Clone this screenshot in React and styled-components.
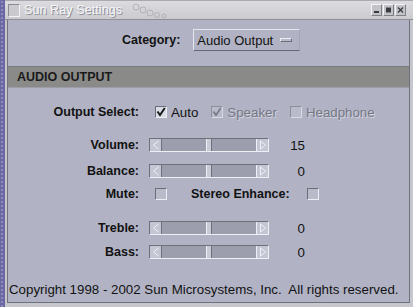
import React from "react";
import styled, { createGlobalStyle } from "styled-components";

const Global = createGlobalStyle`
  html, body { margin: 0; padding: 0; }
  body {
    width: 413px; height: 307px; overflow: hidden;
    background-color: #6a67a3;
    background-image: radial-gradient(#8d8ac0 0.8px, transparent 1px);
    background-size: 4px 4px;
    font-family: "Liberation Sans", Arial, sans-serif;
  }
`;

const Desktop = styled.div`
  width: 413px;
  height: 307px;
  display: flex;
  justify-content: flex-end;
`;

const Window = styled.div`
  width: 408px;
  height: 307px;
  display: flex;
  flex-direction: column;
  background: #c6c7cd;
`;

const TitleBar = styled.div`
  height: 20px;
  box-sizing: border-box;
  border-top: 1px solid #a9a9b1;
  border-bottom: 1px solid #8e8f97;
  background: linear-gradient(#dcdce0, #cbcbcf);
  display: flex;
  align-items: center;
  padding: 0 7px 0 3px;
`;

const TitleBox = styled.div`
  width: 12px;
  height: 13px;
  box-sizing: border-box;
  border: 1px solid;
  border-color: #8a8b93 #f2f2f4 #f2f2f4 #8a8b93;
  background: #c9c9ce;
`;

const TitleText = styled.span`
  margin-left: 4px;
  font-size: 12.5px;
  color: #f7f7f9;
  text-shadow: 1px 1px 0 #8d8e96;
  letter-spacing: 0.1px;
`;

const Decor = styled.svg`
  margin-left: 8px;
  flex: none;
`;

const TitleSpacer = styled.div`
  flex: 1;
`;

const TBtns = styled.div`
  display: flex;
  gap: 1px;
`;

const TBtn = styled.div`
  width: 11px;
  height: 12px;
  box-sizing: border-box;
  border: 1px solid;
  border-color: #f4f4f6 #7e7f87 #7e7f87 #f4f4f6;
  background: #c2c3c9;
  display: flex;
  align-items: center;
  justify-content: center;
`;

const Body = styled.div`
  flex: 1;
  display: flex;
  padding: 0 3px 4px 2px;
  min-height: 0;
`;

const Content = styled.div`
  flex: 1;
  display: flex;
  flex-direction: column;
  background: #b1b3c4;
  border-left: 1px solid #6f717d;
  border-right: 1px solid #6f717d;
  border-bottom: 1px solid #6f717d;
  color: #121212;
`;

const CategoryRow = styled.div`
  margin-top: 9px;
  height: 22px;
  display: flex;
  align-items: center;
  padding-left: 114px;
`;

const Bold = styled.span`
  font-weight: bold;
  font-size: 12.5px;
  white-space: nowrap;
  margin-left: ${(p) => p.$ml || 0}px;
`;

const OptionMenu = styled.div`
  margin-left: 13px;
  width: 107px;
  height: 22px;
  box-sizing: border-box;
  border: 1px solid;
  border-color: #e4e6ee #a4a6b6 #666874 #e4e6ee;
  display: flex;
  align-items: center;
  padding-left: 3px;
  font-size: 13px;
`;

const OptionIndicator = styled.div`
  margin-left: 7px;
  width: 12px;
  height: 4px;
  box-sizing: border-box;
  border: 1px solid;
  border-color: #eceef4 #6a6c78 #6a6c78 #eceef4;
  background: #b8bac9;
`;

const SectionBar = styled.div`
  margin-top: 15px;
  height: 22px;
  box-sizing: border-box;
  background: #8a8b89;
  border-top: 1px solid #7a7b79;
  border-bottom: 1px solid #9c9da6;
  display: flex;
  align-items: center;
  padding-left: 9px;
  font-weight: bold;
  font-size: 12.5px;
  color: #1a1a1a;
`;

const Row = styled.div`
  margin-top: ${(p) => p.$mt}px;
  height: 20px;
  display: grid;
  grid-template-columns: 131px auto;
  column-gap: 10px;
  align-items: center;
`;

const Label = styled.span`
  font-weight: bold;
  font-size: 12.5px;
  text-align: right;
  white-space: nowrap;
`;

const Controls = styled.div`
  display: flex;
  align-items: center;
  gap: ${(p) => p.$gap || 0}px;
`;

const Option = styled.label`
  display: flex;
  align-items: center;
  gap: 4px;
  font-size: 13.3px;
  color: ${(p) => (p.$disabled ? "#767886" : "#121212")};
  text-shadow: ${(p) => (p.$disabled ? "1px 1px 0 #d2d4de" : "none")};
`;

const Box = styled.span`
  width: 12px;
  height: 12px;
  box-sizing: border-box;
  border: 1px solid;
  border-color: ${(p) =>
    p.$disabled ? "#8c8e9c #d8dae2 #d8dae2 #8c8e9c" : "#6a6c78 #eceef4 #eceef4 #6a6c78"};
  background: ${(p) => (p.$checked && !p.$disabled ? "#d9dbe5" : "#b9bbca")};
  display: flex;
  align-items: center;
  justify-content: center;
  margin-left: ${(p) => p.$ml || 0}px;
  flex: none;
`;

const Track = styled.div`
  width: 120px;
  height: 14px;
  box-sizing: border-box;
  border: 1px solid;
  border-color: #6e707c #eef0f6 #eef0f6 #6e707c;
  background: #9c9ead;
  display: flex;
  flex: none;
`;

const Arrow = styled.div`
  width: 12px;
  box-sizing: border-box;
  background: #c4c6d3;
  display: flex;
  align-items: center;
  justify-content: center;
  ${(p) => (p.$right ? "border-left: 1px solid #eef0f6;" : "border-right: 1px solid #6e707c;")}
`;

const Groove = styled.div`
  flex: 1;
  display: flex;
  justify-content: center;
`;

const Thumb = styled.div`
  width: 6px;
  box-sizing: border-box;
  background: #c8cad6;
  border-left: 1px solid #eef0f6;
  border-right: 1px solid #6e707c;
`;

const Value = styled.span`
  width: 36px;
  text-align: right;
  font-size: 13.3px;
`;

const Footer = styled.div`
  margin-top: auto;
  padding: 0 0 4px 1px;
  font-size: 13.3px;
  line-height: 16px;
  white-space: nowrap;
`;

const Check = ({ color = "#1a1a1a", w = 2 }) => (
  <svg width="10" height="10" viewBox="0 0 10 10">
    <path d="M1.5 4.5 L4 8 L8.8 1" fill="none" stroke={color} strokeWidth={w} />
  </svg>
);

const CheckOption = ({ label, checked, disabled, ml }) => (
  <Option $disabled={disabled}>
    <Box $checked={checked} $disabled={disabled} $ml={ml}>
      {checked && (disabled ? <Check color="#767886" w={1.6} /> : <Check />)}
    </Box>
    {label}
  </Option>
);

const Slider = () => (
  <Track>
    <Arrow>
      <svg width="8" height="10" viewBox="0 0 8 10">
        <path d="M6.5 1 L1.5 5 L6.5 9" fill="none" stroke="#eef0f6" strokeWidth="1" />
      </svg>
    </Arrow>
    <Groove>
      <Thumb />
    </Groove>
    <Arrow $right>
      <svg width="8" height="10" viewBox="0 0 8 10">
        <path d="M1.5 1 L6.5 5 L1.5 9 Z" fill="none" stroke="#eef0f6" strokeWidth="1" />
      </svg>
    </Arrow>
  </Track>
);

const SliderRow = ({ label, value, mt }) => (
  <Row $mt={mt}>
    <Label>{label}</Label>
    <Controls>
      <Slider />
      <Value>{value}</Value>
    </Controls>
  </Row>
);

export default function App() {
  return (
    <>
      <Global />
      <Desktop>
        <Window>
          <TitleBar>
            <TitleBox />
            <TitleText>Sun Ray Settings</TitleText>
            <Decor width="40" height="18" viewBox="0 0 40 18">
              <g fill="none" stroke="#a9a9b2" strokeWidth="1" opacity="0.8">
                <circle cx="6" cy="6" r="3" />
                <circle cx="13" cy="9" r="3" />
                <circle cx="20" cy="12" r="3" />
                <circle cx="27" cy="14" r="2.5" />
                <circle cx="34" cy="15" r="2" />
              </g>
            </Decor>
            <TitleSpacer />
            <TBtns>
              <TBtn>
                <svg width="7" height="8" viewBox="0 0 7 8">
                  <rect x="1" y="5" width="5" height="2" fill="#3a3a40" />
                </svg>
              </TBtn>
              <TBtn>
                <svg width="7" height="8" viewBox="0 0 7 8">
                  <rect x="1" y="1.5" width="5" height="5" fill="#3a3a40" />
                </svg>
              </TBtn>
              <TBtn>
                <svg width="7" height="8" viewBox="0 0 7 8">
                  <path d="M1 1.5 L6 6.5 M6 1.5 L1 6.5" stroke="#3a3a40" strokeWidth="1.4" />
                </svg>
              </TBtn>
            </TBtns>
          </TitleBar>
          <Body>
            <Content>
              <CategoryRow>
                <Bold>Category:</Bold>
                <OptionMenu>
                  Audio Output
                  <OptionIndicator />
                </OptionMenu>
              </CategoryRow>
              <SectionBar>AUDIO OUTPUT</SectionBar>
              <Row $mt={14}>
                <Label>Output Select:</Label>
                <Controls $gap={13}>
                  <CheckOption label="Auto" checked ml={6} />
                  <CheckOption label="Speaker" checked disabled />
                  <CheckOption label="Headphone" disabled />
                </Controls>
              </Row>
              <SliderRow label="Volume:" value="15" mt={13} />
              <SliderRow label="Balance:" value="0" mt={6} />
              <Row $mt={3}>
                <Label>Mute:</Label>
                <Controls>
                  <Box $ml={6} />
                  <Bold $ml={24}>Stereo Enhance:</Bold>
                  <Box $ml={17} />
                </Controls>
              </Row>
              <SliderRow label="Treble:" value="0" mt={14} />
              <SliderRow label="Bass:" value="0" mt={4} />
              <Footer>Copyright 1998 - 2002 Sun Microsystems, Inc.&nbsp; All rights reserved.</Footer>
            </Content>
          </Body>
        </Window>
      </Desktop>
    </>
  );
}
